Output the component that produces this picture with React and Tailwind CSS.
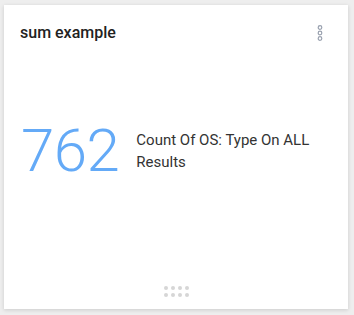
import React from 'react';

const KebabIcon = () => (
  <svg width="6" height="16" viewBox="0 0 6 16" className="text-gray-400">
    <circle cx="3" cy="2.5" r="1.8" fill="none" stroke="currentColor" strokeWidth="1.2" />
    <circle cx="3" cy="8" r="1.8" fill="none" stroke="currentColor" strokeWidth="1.2" />
    <circle cx="3" cy="13.5" r="1.8" fill="none" stroke="currentColor" strokeWidth="1.2" />
  </svg>
);

const DragHandle = () => (
  <div className="grid grid-cols-4 gap-x-[3px] gap-y-[3px]">
    {Array.from({ length: 8 }).map((_, i) => (
      <span key={i} className="w-[4px] h-[4px] rounded-full bg-[#d6d6d6]" />
    ))}
  </div>
);

export default function App() {
  return (
    <div className="w-[354px] h-[315px] bg-[#eeeeee] p-[4px] pt-[5px] pb-[6px]" style={{ fontFamily: 'Roboto, "Liberation Sans", sans-serif' }}>
      <div className="h-full w-[344px] bg-white shadow-[0_1px_4px_rgba(0,0,0,0.15)] flex flex-col">
        {/* header */}
        <div className="flex items-center justify-between pl-[16px] pr-[25px] pt-[18px]">
          <span className="text-[16px] font-medium text-[#222] leading-[20px]">sum example</span>
          <KebabIcon />
        </div>

        {/* metric */}
        <div className="flex-1 flex items-center pl-[17px] pb-[28px]">
          <span className="text-[60px] font-light text-[#64aaf7] leading-none tracking-[-0.5px]">762</span>
          <span className="ml-[17px] text-[15px] leading-[22px] text-[#333] w-[190px]">Count Of OS: Type On ALL Results</span>
        </div>

        {/* drag handle */}
        <div className="flex justify-center pb-[12px]">
          <DragHandle />
        </div>
      </div>
    </div>
  );
}
